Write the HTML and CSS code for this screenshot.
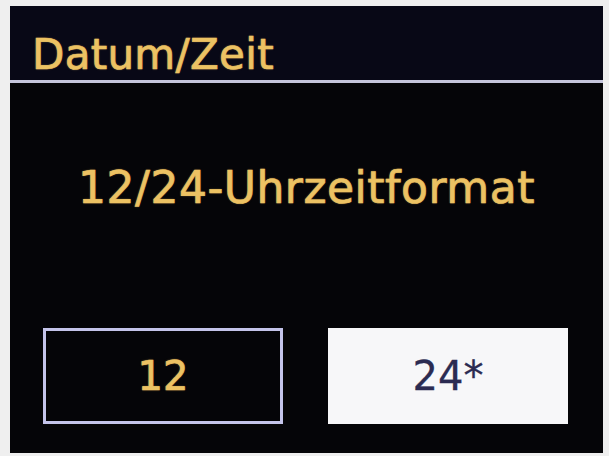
FILE: index.html
```html
<!DOCTYPE html>
<html lang="de">
<head>
    <meta charset="UTF-8">
    <meta name="viewport" content="width=device-width, initial-scale=1.0">
    <title>Datum/Zeit</title>
    <link rel="stylesheet" href="styles.css">
</head>
<body>
    <div class="screen">
        <div class="screen-header">Datum/Zeit</div>

        <div class="screen-title">12/24-Uhrzeitformat</div>

        <div class="choices">
            <div class="choice">12</div>
            <div class="choice selected">24*</div>
        </div>
    </div>
</body>
</html>
```

FILE: styles.css
```css
body {
    margin: 0;
    background: #efefef;
    font-family: "DejaVu Sans", Verdana, sans-serif;
}

.screen {
    margin: 6px 6px 0 10px;
    width: 593px;
    height: 447px;
    background: #050508;
    display: flex;
    flex-direction: column;
}

.screen-header {
    height: 77px;
    box-sizing: border-box;
    padding: 24px 0 0 22px;
    background: #080816;
    border-bottom: 3px solid #c6c6dc;
    color: #ecc263;
    font-size: 42px;
    letter-spacing: 0.3px;
    line-height: normal;
    -webkit-text-stroke: 0.7px #ecc263;
    text-shadow: 0 0 2px rgba(236, 194, 99, 0.5);
}

.screen-title {
    margin-top: 79px;
    text-align: center;
    color: #ecc263;
    font-size: 44px;
    letter-spacing: 0.5px;
    -webkit-text-stroke: 0.7px #ecc263;
    text-shadow: 0 0 2px rgba(236, 194, 99, 0.5);
}

.choices {
    display: flex;
    gap: 45px;
    margin-top: 115px;
    padding-left: 33px;
}

.choice {
    width: 240px;
    height: 96px;
    box-sizing: border-box;
    border: 3px solid #c4c4ea;
    display: flex;
    justify-content: center;
    align-items: center;
    color: #ecc263;
    font-size: 40px;
    -webkit-text-stroke: 0.7px #ecc263;
    text-shadow: 0 0 2px rgba(236, 194, 99, 0.5);
}

.choice.selected {
    background: #f7f7f9;
    border-color: #f7f7f9;
    color: #2b2b52;
    -webkit-text-stroke: 0.3px #2b2b52;
    text-shadow: none;
}
```
